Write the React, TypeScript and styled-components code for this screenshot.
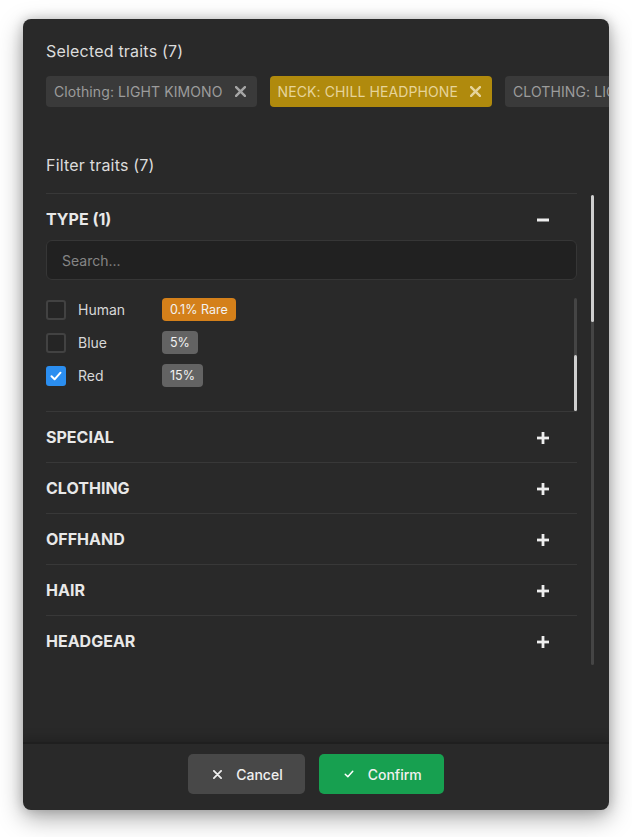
import React, { useState } from 'react';
import styled, { createGlobalStyle } from 'styled-components';

const GlobalStyle = createGlobalStyle`
  html, body {
    margin: 0;
    padding: 0;
    background: #ffffff;
    font-family: Inter, "Noto Sans", "Liberation Sans", sans-serif;
  }
  * {
    box-sizing: border-box;
  }
`;

const Page = styled.div`
  padding: 19px 23px 27px;
`;

const Modal = styled.div`
  display: flex;
  flex-direction: column;
  height: 791px;
  background: #292929;
  border-radius: 8px;
  overflow: hidden;
  box-shadow: 0 8px 24px rgba(0, 0, 0, 0.35), 0 0 12px rgba(0, 0, 0, 0.18);
`;

const Body = styled.div`
  flex: 1;
  display: flex;
  flex-direction: column;
  padding: 22px 15px 0 23px;
  overflow: hidden;
`;

const Label = styled.div<{ $gap?: number }>`
  margin-top: ${(p) => p.$gap ?? 0}px;
  font-size: 16px;
  line-height: 20px;
  letter-spacing: 0.2px;
  color: #dcdcdc;
`;

const ChipRow = styled.div`
  display: flex;
  gap: 13px;
  margin-top: 15px;
  margin-right: -15px;
  overflow: hidden;
  white-space: nowrap;
`;

const Chip = styled.div<{ $accent?: boolean }>`
  flex-shrink: 0;
  display: flex;
  align-items: center;
  gap: 12px;
  height: 31px;
  padding: 0 11px 0 8px;
  border-radius: 4px;
  font-size: 14px;
  letter-spacing: 0.1px;
  background: ${(p) => (p.$accent ? '#b08a0d' : '#3a3a3a')};
  color: ${(p) => (p.$accent ? '#e6d49a' : '#9c9c9c')};
`;

const ScrollArea = styled.div`
  display: flex;
  gap: 14px;
  margin-top: 18px;
  height: 472px;
  overflow: hidden;
`;

const Sections = styled.div`
  flex: 1;
  min-width: 0;
`;

const Track = styled.div<{ $top?: number }>`
  flex-shrink: 0;
  width: 3px;
  margin-top: ${(p) => p.$top ?? 0}px;
  background: #454545;
  border-radius: 2px;
  display: flex;
  flex-direction: column;
`;

const Thumb = styled.div`
  width: 3px;
  background: #cfcfcf;
  border-radius: 2px;
`;

const Section = styled.div`
  border-top: 1px solid #383838;
`;

const SectionHeader = styled.div<{ $open?: boolean }>`
  display: flex;
  align-items: center;
  justify-content: space-between;
  padding: 16px 27px ${(p) => (p.$open ? 11 : 15)}px 0;
  font-size: 16px;
  line-height: 19px;
  font-weight: 700;
  color: #e8e8e8;
  text-transform: uppercase;
  cursor: pointer;
`;

const Search = styled.input`
  display: block;
  width: 100%;
  height: 40px;
  padding: 0 15px;
  background: #212121;
  border: 1px solid #363636;
  border-radius: 6px;
  font-family: inherit;
  font-size: 14px;
  color: #ddd;
  outline: none;

  &::placeholder {
    color: #858585;
  }
`;

const ListBox = styled.div`
  display: flex;
  margin-top: 18px;
  height: 113px;
`;

const List = styled.div`
  flex: 1;
  display: flex;
  flex-direction: column;
  gap: 10px;
`;

const Row = styled.label`
  display: flex;
  align-items: center;
  height: 23px;
  cursor: pointer;
`;

const Box = styled.span<{ $checked?: boolean }>`
  display: flex;
  align-items: center;
  justify-content: center;
  width: 20px;
  height: 20px;
  border-radius: 3px;
  background: ${(p) => (p.$checked ? '#2b8ef0' : '#252525')};
  border: ${(p) => (p.$checked ? 'none' : '2px solid #424242')};
`;

const ItemName = styled.span`
  width: 84px;
  margin-left: 12px;
  font-size: 14px;
  color: #d8d8d8;
`;

const Badge = styled.span<{ $rare?: boolean }>`
  height: 23px;
  line-height: 23px;
  padding: 0 8px;
  border-radius: 4px;
  font-size: 12.5px;
  color: #f2f2f2;
  background: ${(p) => (p.$rare ? '#d4801a' : '#636363')};
`;

const Footer = styled.div`
  display: flex;
  justify-content: center;
  gap: 14px;
  height: 68px;
  padding-top: 10px;
  border-top: 2px solid #1f1f1f;
  box-shadow: 0 -4px 10px rgba(0, 0, 0, 0.18);
`;

const Button = styled.button<{ $primary?: boolean }>`
  display: flex;
  align-items: center;
  gap: 14px;
  height: 40px;
  padding: 0 22px 0 25px;
  border: none;
  border-radius: 5px;
  font-family: inherit;
  font-size: 14px;
  font-weight: 500;
  color: #f0f0f0;
  background: ${(p) => (p.$primary ? '#17a050' : '#484848')};
  cursor: pointer;
`;

const Cross = ({ size = 10, color = '#a5a5a5', w = 2.2 }: { size?: number; color?: string; w?: number }) => (
  <svg width={size} height={size} viewBox="0 0 10 10">
    <path d="M1 1L9 9M9 1L1 9" stroke={color} strokeWidth={w} strokeLinecap="round" />
  </svg>
);

const Check = ({ size = 12, w = 2 }: { size?: number; w?: number }) => (
  <svg width={size} height={size} viewBox="0 0 12 12">
    <path d="M1.5 6.3L4.6 9.3L10.5 2.7" fill="none" stroke="#fff" strokeWidth={w} strokeLinecap="round" strokeLinejoin="round" />
  </svg>
);

const Toggle = ({ open }: { open: boolean }) => (
  <svg width="14" height="14" viewBox="0 0 14 14">
    <path d="M1 7H13" stroke="#eeeeee" strokeWidth="2.8" />
    {!open && <path d="M7 1V13" stroke="#eeeeee" strokeWidth="2.8" />}
  </svg>
);

const chips = [
  { text: 'Clothing: LIGHT KIMONO', accent: false },
  { text: 'NECK: CHILL HEADPHONE', accent: true },
  { text: 'CLOTHING: LIGHT KIMONO', accent: false },
];

const items = [
  { name: 'Human', pct: '0.1% Rare', rare: true },
  { name: 'Blue', pct: '5%', rare: false },
  { name: 'Red', pct: '15%', rare: false },
];

const groups = ['Special', 'Clothing', 'Offhand', 'Hair', 'Headgear'];

export default function App() {
  const [checked, setChecked] = useState<string[]>(['Red']);

  const toggle = (name: string) =>
    setChecked((c) => (c.includes(name) ? c.filter((n) => n !== name) : [...c, name]));

  return (
    <Page>
      <GlobalStyle />
      <Modal>
        <Body>
          <Label>Selected traits (7)</Label>
          <ChipRow>
            {chips.map((c, i) => (
              <Chip key={i} $accent={c.accent}>
                {c.text}
                <Cross size={11} color={c.accent ? '#e6d49a' : '#a5a5a5'} />
              </Chip>
            ))}
          </ChipRow>

          <Label $gap={48}>Filter traits (7)</Label>

          <ScrollArea>
            <Sections>
              <Section>
                <SectionHeader $open>
                  Type (1)
                  <Toggle open />
                </SectionHeader>
                <Search placeholder="Search..." />
                <ListBox>
                  <List>
                    {items.map((it) => {
                      const on = checked.includes(it.name);
                      return (
                        <Row key={it.name} onClick={() => toggle(it.name)}>
                          <Box $checked={on}>{on && <Check />}</Box>
                          <ItemName>{it.name}</ItemName>
                          <Badge $rare={it.rare}>{it.pct}</Badge>
                        </Row>
                      );
                    })}
                  </List>
                  <Track>
                    <div style={{ flex: 1 }} />
                    <Thumb style={{ height: 56 }} />
                  </Track>
                </ListBox>
              </Section>
              {groups.map((g) => (
                <Section key={g}>
                  <SectionHeader>
                    {g}
                    <Toggle open={false} />
                  </SectionHeader>
                </Section>
              ))}
            </Sections>
            <Track $top={2}>
              <Thumb style={{ height: 127 }} />
            </Track>
          </ScrollArea>
        </Body>

        <Footer>
          <Button>
            <Cross size={9} color="#eeeeee" w={2} />
            Cancel
          </Button>
          <Button $primary>
            <Check size={10} w={1.8} />
            Confirm
          </Button>
        </Footer>
      </Modal>
    </Page>
  );
}
